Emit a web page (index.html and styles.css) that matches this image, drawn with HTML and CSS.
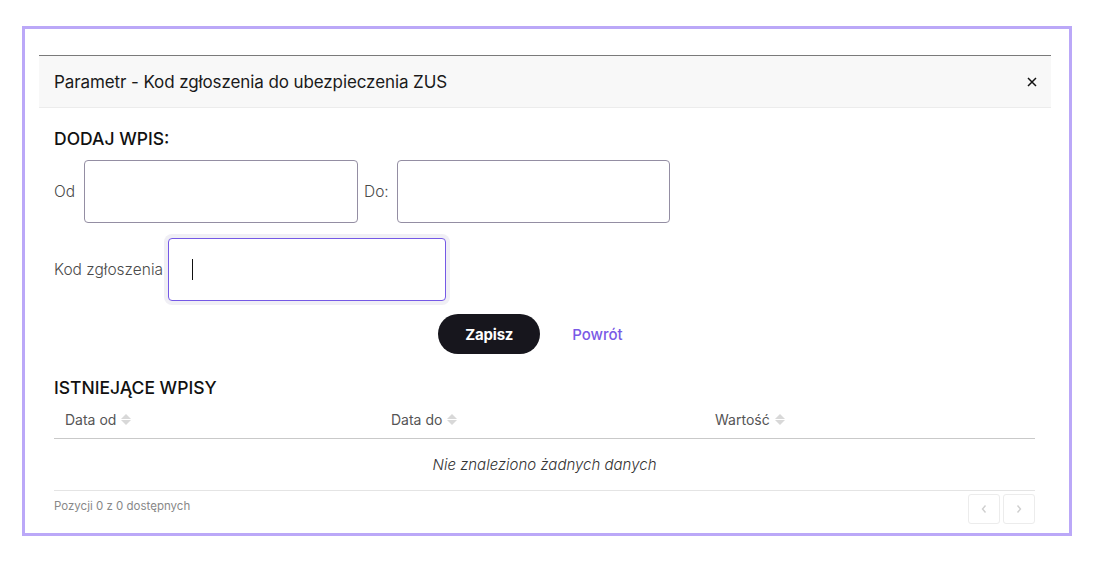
FILE: index.html
```html
<!DOCTYPE html>
<html lang="pl">
<head>
<meta charset="utf-8">
<title>Parametr</title>
<link rel="stylesheet" href="styles.css">
</head>
<body>
<div class="frame">
  <div class="modal">
    <div class="modal-header">
      <span class="modal-title">Parametr - Kod zgłoszenia do ubezpieczenia ZUS</span>
      <svg class="close" width="10" height="10" viewBox="0 0 10 10"><path d="M1 1 L9 9 M9 1 L1 9" stroke="#111" stroke-width="1.5" fill="none"/></svg>
    </div>
    <div class="modal-body">
      <h3 class="section-title">DODAJ WPIS:</h3>
      <div class="form-row">
        <label class="lbl lbl-od">Od</label>
        <div class="field field-od"></div>
        <label class="lbl lbl-do">Do:</label>
        <div class="field field-do"></div>
      </div>
      <div class="form-row row-2">
        <label class="lbl lbl-kod">Kod zgłoszenia</label>
        <div class="field field-kod focused"><span class="caret"></span></div>
      </div>
      <div class="actions">
        <button class="btn-save">Zapisz</button>
        <a class="btn-back">Powrót</a>
      </div>
      <h3 class="section-title existing">ISTNIEJĄCE WPISY</h3>
      <div class="table">
        <div class="thead">
          <div class="th">Data od <span class="sort"><i class="up"></i><i class="down"></i></span></div>
          <div class="th">Data do <span class="sort"><i class="up"></i><i class="down"></i></span></div>
          <div class="th">Wartość <span class="sort"><i class="up"></i><i class="down"></i></span></div>
        </div>
        <div class="empty">Nie znaleziono żadnych danych</div>
      </div>
      <div class="table-footer">
        <span class="info">Pozycji 0 z 0 dostępnych</span>
        <div class="pager">
          <span class="page-btn"><svg width="8" height="10" viewBox="0 0 8 10"><path d="M5.5 1.5 L2.5 5 L5.5 8.5" fill="none" stroke="#cfcfcf" stroke-width="1.4"/></svg></span>
          <span class="page-btn"><svg width="8" height="10" viewBox="0 0 8 10"><path d="M2.5 1.5 L5.5 5 L2.5 8.5" fill="none" stroke="#cfcfcf" stroke-width="1.4"/></svg></span>
        </div>
      </div>
    </div>
  </div>
</div>
</body>
</html>
```

FILE: styles.css
```css
* { box-sizing: border-box; }
html, body { margin: 0; padding: 0; background: #fff; }
body {
  font-family: Inter, "Noto Sans", sans-serif;
  color: #1b1b1f;
}
.frame {
  margin: 26px 0 0 22px;
  width: 1050px;
  height: 510px;
  border: 3px solid #bba8f8;
  padding: 26px 18px 0 14px;
  overflow: hidden;
}
.modal {
  width: 1012px;
}
.modal-header {
  height: 53px;
  background: #f8f8f8;
  border-top: 1px solid #7a7a7a;
  border-bottom: 1px solid #ececec;
  display: flex;
  align-items: center;
  justify-content: space-between;
  padding: 1px 14px 0 15px;
}
.modal-title {
  font-size: 17px;
  color: #1a1a1a;
  letter-spacing: -0.1px;
}
.close {
  display: block;
}
.modal-body {
  padding: 21px 16px 0 15px;
}
.section-title {
  margin: 0;
  font-size: 17.5px;
  font-weight: 500;
  line-height: 20px;
  color: #111;
}
.form-row {
  display: flex;
  align-items: center;
  margin-top: 11px;
}
.row-2 { margin-top: 15px; }
.lbl {
  font-size: 15.5px;
  font-weight: 300;
  color: #4a4a4a;
}
.lbl-od { margin-right: 9px; width: 21px; }
.lbl-do { margin-left: 6px; margin-right: 8px; }
.lbl-kod { margin-right: 5px; }
.field {
  height: 63px;
  border: 1px solid #948ea3;
  border-radius: 4px;
  background: #fff;
}
.field-od { width: 274px; }
.field-do { width: 273px; }
.field-kod {
  width: 278px;
  border-color: #7559e6;
  box-shadow: 0 0 0 4px #f0eff5;
  display: flex;
  align-items: center;
  padding-left: 23px;
}
.caret {
  display: block;
  width: 1px;
  height: 21px;
  background: #111;
}
.actions {
  display: flex;
  justify-content: center;
  align-items: center;
  margin-top: 13px;
}
.btn-save {
  width: 102px;
  height: 40px;
  border: none;
  border-radius: 20px;
  background: #17161d;
  color: #fff;
  font-family: Inter, sans-serif;
  font-size: 15px;
  font-weight: 700;
  letter-spacing: -0.2px;
}
.btn-back {
  padding: 0 28px 0 32px;
  font-size: 15px;
  font-weight: 500;
  color: #7a5ae6;
}
.existing { margin-top: 24px; }
.table { margin-top: 0; }
.thead {
  display: grid;
  grid-template-columns: 326px 324px 1fr;
  padding: 13px 0 10px 11px;
  border-bottom: 1px solid #c9c9c9;
}
.th {
  font-size: 14px;
  line-height: 17px;
  color: #555;
  display: flex;
  align-items: center;
}
.sort {
  display: inline-flex;
  flex-direction: column;
  gap: 1px;
  margin-left: 5px;
}
.sort i {
  display: block;
  width: 0;
  height: 0;
  border-left: 5px solid transparent;
  border-right: 5px solid transparent;
}
.sort .up { border-bottom: 5px solid #d8d8d8; }
.sort .down { border-top: 5px solid #d8d8d8; }
.empty {
  height: 52px;
  display: flex;
  align-items: center;
  justify-content: center;
  font-size: 15px;
  font-style: italic;
  font-weight: 300;
  color: #333;
  border-bottom: 1px solid #e4e4e4;
}
.table-footer {
  display: flex;
  justify-content: space-between;
  align-items: flex-start;
  padding-top: 3px;
}
.info {
  font-size: 11.5px;
  line-height: 15px;
  color: #888;
  margin-top: 5px;
}
.pager { display: flex; gap: 3px; }
.page-btn {
  width: 32px;
  height: 30px;
  border: 1px solid #ececec;
  border-radius: 3px;
  display: flex;
  align-items: center;
  justify-content: center;
}
```
